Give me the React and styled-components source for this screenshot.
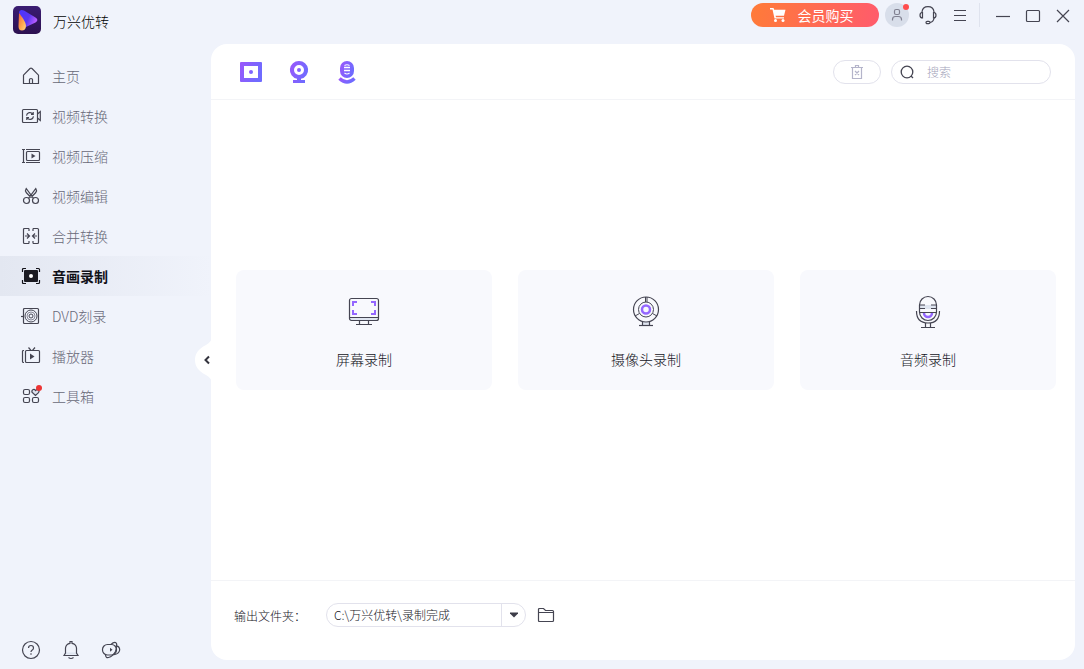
import { useState } from "react";
import styled, { createGlobalStyle } from "styled-components";

const GlobalStyle = createGlobalStyle`
	* {
		box-sizing: border-box;
	}

	body {
		margin: 0;
		background: #f0f3fb;
		color: #25252e;
		font-family: "Noto Sans CJK SC", "Noto Sans", sans-serif;
		font-size: 14px;
		font-weight: 300;
		line-height: 20px;
	}

	button,
	input,
	select {
		font: inherit;
		color: inherit;
	}
`;

const LINE = "#454552";

const Icon = ({ width = 20, height = 20, children, ...rest }) => (
	<svg
		width={width}
		height={height}
		viewBox={`0 0 ${width} ${height}`}
		fill="none"
		stroke={LINE}
		strokeWidth="1.2"
		overflow="visible"
		aria-hidden="true"
		{...rest}
	>
		{children}
	</svg>
);

const Logo = () => (
	<svg width="28" height="28" viewBox="0 0 28 28" aria-hidden="true">
		<defs>
			<linearGradient id="logoBack" x1="0" y1="0" x2="0" y2="1">
				<stop offset="0" stopColor="#3a1c72" />
				<stop offset="1" stopColor="#2d1150" />
			</linearGradient>
			<linearGradient id="logoPlay" x1="0" y1="0" x2="1" y2="0.4">
				<stop offset="0" stopColor="#4a35ff" />
				<stop offset="0.6" stopColor="#5a35f0" />
				<stop offset="1" stopColor="#b35cff" />
			</linearGradient>
			<linearGradient id="logoDrop" x1="0" y1="0" x2="1" y2="1">
				<stop offset="0" stopColor="#f0603a" />
				<stop offset="0.6" stopColor="#ffac50" />
				<stop offset="1" stopColor="#ffd88c" />
			</linearGradient>
		</defs>
		<rect width="28" height="28" rx="5" fill="url(#logoBack)" />
		<path
			d="M6 7C6 4 8.500 3.300 11 4.500L22.500 11.500C25 13 25 15 22.500 16.500L13 21Z"
			fill="url(#logoPlay)"
		/>
		<path
			d="M6 7C9 11 13 16 13 20C13 23 11 24.500 9 24.500C6.500 24.500 5.500 23 5.500 20Z"
			fill="url(#logoDrop)"
		/>
	</svg>
);

const HomeIcon = () => (
	<Icon>
		<path d="M2.500 9.200 9 2.500Q10 1.700 11 2.500L17.500 9.200V17.500H2.500Z" />
		<path d="M8.500 17.500V13.500Q8.500 12.500 10 12.500T11.500 13.500V17.500" />
	</Icon>
);

const ConvertIcon = () => (
	<Icon>
		<rect x="1.500" y="3.500" width="15" height="13" rx="1" />
		<path d="M16.500 8 19.300 5.500V14.500L16.500 12" />
		<path d="M5.500 9.600A3.500 3.500 0 0 1 11.800 8M12.500 10.400A3.500 3.500 0 0 1 6.200 12M12.200 6V8.300H10M5.800 14V11.700H8" />
	</Icon>
);

const CompressIcon = () => (
	<Icon>
		<path d="M2.500 3V17M1 3.500H4M1 16.500H4M5 3.500H19M5 16.500H19" />
		<rect x="5.500" y="5.500" width="13" height="9" rx="1" />
		<path d="M10.500 7.500 14.500 10 10.500 12.500Z" fill={LINE} stroke="none" />
	</Icon>
);

const CutIcon = () => (
	<Icon>
		<circle cx="5.500" cy="14.500" r="3" />
		<circle cx="14.500" cy="14.500" r="3" />
		<path d="M7.500 12.300 14.800 2.500Q16.200 4.500 14.800 6.500L10 11.500M12.500 12.300 5.200 2.500Q3.800 4.500 5.200 6.500L10 11.500" />
	</Icon>
);

const MergeIcon = () => (
	<Icon>
		<path d="M8 2.500H3.500Q2.500 2.500 2.500 3.500V16.500Q2.500 17.500 3.500 17.500H8M12 2.500H16.500Q17.500 2.500 17.500 3.500V16.500Q17.500 17.500 16.500 17.500H12" />
		<path d="M8 2.500V5M12 2.500V5M8 15V17.500M12 15V17.500M4 10H8.500M16 10H11.500M6 7.500 8.500 10 6 12.500M14 7.500 11.500 10 14 12.500" />
	</Icon>
);

const RecordIcon = () => (
	<Icon stroke="#111118">
		<path d="M1.500 6V3.500Q1.500 2.500 2.500 2.500H5M15 2.500H17.500Q18.500 2.500 18.500 3.500V6M18.500 14V16.500Q18.500 17.500 17.500 17.500H15M5 17.500H2.500Q1.500 17.500 1.500 16.500V14" />
		<rect x="3" y="4" width="14" height="12" rx="1" fill="#1b1b22" stroke="none" />
		<circle cx="10" cy="10" r="2" fill="#fff" stroke="none" />
	</Icon>
);

const DiscIcon = () => (
	<Icon>
		<rect x="2.500" y="2.500" width="15" height="15" rx="1" />
		<circle cx="10" cy="10" r="6" strokeWidth="1" />
		<circle cx="10" cy="10" r="4" stroke="#8a8a98" strokeWidth="1" />
		<circle cx="10" cy="10" r="2" strokeWidth="1" />
		<path d="M0 10.500H3" />
	</Icon>
);

const PlayerIcon = () => (
	<Icon>
		<rect x="4.500" y="4.500" width="14" height="12" rx="1" />
		<path d="M3 4.500H2.500Q1.500 4.500 1.500 5.500V15.500Q1.500 16.500 2.500 16.500H3M7.500 1.500 10 4.500H11.500L14 1.500" />
		<path d="M9 7.500 13.500 10.500 9 13.500Z" fill={LINE} stroke="none" />
	</Icon>
);

const ToolboxIcon = () => (
	<Icon>
		<rect x="2.500" y="3.500" width="6" height="5" rx="1.500" />
		<rect x="2.500" y="11.500" width="6" height="5" rx="1.500" />
		<rect x="11.500" y="11.500" width="6" height="5" rx="1.500" />
		<path
			d="M14.500 9.500 11 6.300Q10.500 4 12.300 3.500Q13.700 3.200 14.500 4.500Q16 3 17.500 4Q18.600 5.500 17.500 6.700Z"
			fill="#dfe3ef"
		/>
		<circle cx="18" cy="2" r="3" fill="#ec3434" stroke="none" />
	</Icon>
);

const CartIcon = () => (
	<Icon width={16} height={14} stroke="none" fill="#fff">
		<path d="M0 0H3.500L4.200 1.800H15.500L14 7.800H5.600L6 9.200H14V10.600H4.500L2.500 1.500H0Z" />
		<circle cx="5.500" cy="12.500" r="1.500" />
		<circle cx="13" cy="12.500" r="1.500" />
	</Icon>
);

const UserIcon = () => (
	<Icon width={12} height={14} stroke="#818191">
		<rect x="3.500" y="1.500" width="5" height="5" rx="1.500" />
		<path d="M1.500 12.500V11.500Q1.500 8.500 4.500 8.500H7.500Q10.500 8.500 10.500 11.500V12.500" />
	</Icon>
);

const HeadsetIcon = () => (
	<Icon>
		<path d="M4 8V7Q4.500 1.600 10 1.600T16 7V8M16 13Q15.500 17 12 17.500" />
		<path d="M4.500 7.500Q2 7.500 2 10.200T4.500 13ZM15.500 7.500Q18 7.500 18 10.200T15.500 13Z" />
		<rect x="8" y="16.300" width="4" height="2.400" rx="1.200" />
	</Icon>
);

const MenuIcon = () => (
	<Icon>
		<path d="M4 5.500H16M4 10.500H16M4 15.500H16" />
	</Icon>
);

const MinimizeIcon = () => (
	<Icon>
		<path d="M3 11.500H17" />
	</Icon>
);

const MaximizeIcon = () => (
	<Icon>
		<rect x="3.500" y="5.500" width="13" height="11" rx="1" />
	</Icon>
);

const CloseIcon = () => (
	<Icon>
		<path d="M4 5 16 17M16 5 4 17" />
	</Icon>
);

const PurpleGradient = ({ id }) => (
	<linearGradient id={id} x1="0" y1="0" x2="1" y2="0.4">
		<stop offset="0" stopColor="#9c56fb" />
		<stop offset="1" stopColor="#6f6bff" />
	</linearGradient>
);

const ScreenTab = () => (
	<svg width="24" height="24" viewBox="0 0 24 24" aria-hidden="true">
		<PurpleGradient id="screenTab" />
		<path
			d="M2 2H22Q23 2 23 3V21Q23 22 22 22H2Q1 22 1 21V3Q1 2 2 2ZM5 6V18H19V6Z"
			fill="url(#screenTab)"
			fillRule="evenodd"
		/>
		<circle cx="12" cy="12" r="2" fill="url(#screenTab)" />
	</svg>
);

const CameraTab = () => (
	<svg width="24" height="24" viewBox="0 0 24 24" aria-hidden="true">
		<PurpleGradient id="cameraTab" />
		<path
			d="M12 1A9 9 0 0 1 14 18.800V20H18V23H6V20H10V18.800A9 9 0 0 1 12 1ZM12 5A5 5 0 1 0 12 15A5 5 0 1 0 12 5Z"
			fill="url(#cameraTab)"
			fillRule="evenodd"
		/>
		<circle cx="12" cy="10" r="2" fill="url(#cameraTab)" />
	</svg>
);

const AudioTab = () => (
	<svg width="24" height="24" viewBox="0 0 24 24" aria-hidden="true">
		<PurpleGradient id="audioTab" />
		<rect x="5" y="1" width="14" height="17" rx="7" fill="url(#audioTab)" />
		<path d="M9 7.500H15M9 10.500H15" stroke="#fff" strokeWidth="1.500" />
		<path
			d="M9.500 5.500Q12 4 14.500 5.500M9.500 13Q12 15 14.500 13"
			stroke="#fff"
			strokeWidth="1.200"
			fill="none"
		/>
		<path
			d="M4.500 18.500Q12 25.500 19.500 18.500"
			stroke="url(#audioTab)"
			strokeWidth="3.500"
			fill="none"
		/>
	</svg>
);

const TrashIcon = () => (
	<Icon width={14} height={16} stroke="#b4b4ca">
		<path d="M1 3.500H13M5.500 3V1.500H8.500V3M2.500 3.500V14.500H11.500V3.500M5 7 9 11M9 7 5 11" />
	</Icon>
);

const SearchIcon = () => (
	<Icon width={14} height={14} strokeWidth="1.3">
		<circle cx="7" cy="7" r="5.800" />
		<path d="M11 11 13 13" />
	</Icon>
);

const MonitorIcon = () => (
	<Icon width={36} height={36}>
		<path d="M4 25H32V27.500H4Z" fill="#dfe5f0" stroke="none" />
		<rect x="3.500" y="5.500" width="29" height="22" rx="2" />
		<path d="M4 24.500H32M13.500 28V31M22.500 28V31M10 31.500H26" />
		<path
			d="M11 9H7V13M25 9H29V13M29 17V21H25M11 21H7V17"
			stroke="#9467ff"
			strokeWidth="2"
		/>
	</Icon>
);

const WebcamIcon = () => (
	<Icon width={36} height={36}>
		<path d="M14.500 28V32.500H21.500V28Z" fill="#dfe5f0" />
		<circle cx="18" cy="16.500" r="12.500" fill="#f8f9fd" />
		<circle cx="18" cy="16.500" r="7.500" strokeWidth="1" />
		<circle cx="18" cy="16.500" r="4" stroke="#9467ff" strokeWidth="2.500" />
		<path d="M17.500 4V9M19 4V9M11.500 20.500 7 23M24.500 20.500 29 23" strokeWidth="1" />
		<path d="M11 32.500H25" />
	</Icon>
);

const MicIcon = () => (
	<Icon width={36} height={36}>
		<path d="M10 12H26V16H10Z" fill="#dfe5f0" stroke="none" />
		<path
			d="M14 20A4 4 0 0 0 22 20"
			stroke="#9467ff"
			strokeWidth="2.500"
		/>
		<rect x="9.500" y="3.500" width="17" height="24" rx="8.500" />
		<path d="M9.500 19.500H26.500M9.500 12H15M21 12H26.500M9.500 15.500H15M21 15.500H26.500" />
		<path d="M6.500 18Q6.500 30 18 30T29.500 18M15.500 30V34M20.500 30V34M11 34.500H25" />
	</Icon>
);

const FolderIcon = () => (
	<Icon width={18} height={18}>
		<path d="M1.500 3.500Q1.500 2.500 2.500 2.500H6.500L8.500 4.500H15.500Q16.500 4.500 16.500 5.500V14.500Q16.500 15.500 15.500 15.500H2.500Q1.500 15.500 1.500 14.500ZM1.500 6.500H16.500" />
	</Icon>
);

const HelpIcon = () => (
	<Icon>
		<circle cx="10" cy="10" r="8.500" />
		<path d="M7.500 8Q7.500 5.500 10 5.500T12.500 8Q12.500 9.300 11 10.200Q10 10.900 10 12M10 13.300V14.800" />
	</Icon>
);

const BellIcon = () => (
	<Icon>
		<path d="M4 12.500H16V14.500H4Z" fill="#dfe5f0" stroke="none" />
		<path d="M3 15.500 4.500 13V8Q5 4 9 3.300V1.500H11V3.300Q15 4 15.500 8V13L17 15.500ZM7.500 17.500Q10 19.500 12.500 17.500" />
	</Icon>
);

const FeedbackIcon = () => (
	<Icon>
		<rect x="1.500" y="4.500" width="14" height="10.500" rx="5" />
		<path d="M10 4.500Q12.500 2 14.500 2.500Q16.300 3.500 15.500 5.800Q18.700 6.500 18.700 10Q18 14 13 14.700M4.500 15Q4.800 18.200 7.500 17.500Q12 16.200 14.500 11.500Q16 8 15.500 5.800" />
		<path d="M9 7.800 11.500 9.800 9 11.800Z" fill={LINE} stroke="none" />
	</Icon>
);

const navItems = [
	{ label: "主页", Glyph: HomeIcon },
	{ label: "视频转换", Glyph: ConvertIcon },
	{ label: "视频压缩", Glyph: CompressIcon },
	{ label: "视频编辑", Glyph: CutIcon },
	{ label: "合并转换", Glyph: MergeIcon },
	{ label: "音画录制", Glyph: RecordIcon },
	{ label: "DVD刻录", Glyph: DiscIcon },
	{ label: "播放器", Glyph: PlayerIcon },
	{ label: "工具箱", Glyph: ToolboxIcon }
];

const recorders = [
	{ label: "屏幕录制", Glyph: MonitorIcon, Tab: ScreenTab },
	{ label: "摄像头录制", Glyph: WebcamIcon, Tab: CameraTab },
	{ label: "音频录制", Glyph: MicIcon, Tab: AudioTab }
];

const App = () => {
	const [active, setActive] = useState("音画录制");
	const [query, setQuery] = useState("");

	return (
		<Window>
			<GlobalStyle />
			<TitleBar>
				<Brand>
					<Logo />
					<AppName>万兴优转</AppName>
				</Brand>
				<BuyButton>
					<CartIcon />
					会员购买
				</BuyButton>
				<Avatar aria-label="账户">
					<UserIcon />
					<AvatarDot />
				</Avatar>
				<BarButton aria-label="客服">
					<HeadsetIcon />
				</BarButton>
				<BarButton aria-label="菜单">
					<MenuIcon />
				</BarButton>
				<WindowControls>
					<BarButton $width="30px" aria-label="最小化">
						<MinimizeIcon />
					</BarButton>
					<BarButton $width="30px" aria-label="最大化">
						<MaximizeIcon />
					</BarButton>
					<BarButton $width="30px" aria-label="关闭">
						<CloseIcon />
					</BarButton>
				</WindowControls>
			</TitleBar>

			<Body>
				<Sidebar>
					<Nav>
						{navItems.map(({ label, Glyph }) => (
							<NavItem
								key={label}
								$active={label === active}
								onClick={() => setActive(label)}
							>
								<Glyph />
								{label}
							</NavItem>
						))}
					</Nav>
					<SidebarFooter>
						<PlainButton aria-label="帮助">
							<HelpIcon />
						</PlainButton>
						<PlainButton aria-label="通知">
							<BellIcon />
						</PlainButton>
						<PlainButton aria-label="反馈">
							<FeedbackIcon />
						</PlainButton>
					</SidebarFooter>
				</Sidebar>

				<Panel>
					<CollapseButton aria-label="收起">
						<svg width="17" height="44" viewBox="0 0 17 44" aria-hidden="true">
							<path
								d="M17 0Q16 4 11 7C3 11 0 16 0 22S3 33 11 37Q16 40 17 44Z"
								fill="#fff"
							/>
							<path
								d="M14 18.500 10.500 22 14 25.500"
								fill="none"
								stroke="#33333d"
								strokeWidth="2"
							/>
						</svg>
					</CollapseButton>

					<Toolbar>
						<Tabs>
							{recorders.map(({ label, Tab }) => (
								<TabButton key={label} aria-label={label}>
									<Tab />
								</TabButton>
							))}
						</Tabs>
						<TrashButton aria-label="删除">
							<TrashIcon />
						</TrashButton>
						<SearchBox>
							<SearchIcon />
							<SearchInput
								aria-label="搜索"
								placeholder="搜索"
								value={query}
								onChange={e => setQuery(e.target.value)}
							/>
						</SearchBox>
					</Toolbar>

					<Content>
						<Cards>
							{recorders.map(({ label, Glyph }) => (
								<Card key={label}>
									<Glyph />
									{label}
								</Card>
							))}
						</Cards>
					</Content>

					<OutputBar>
						<OutputLabel htmlFor="output">输出文件夹：</OutputLabel>
						<SelectBox>
							<Select id="output">
								<option>C:\万兴优转\录制完成</option>
							</Select>
							<SelectArrow>
								<svg width="8" height="6" viewBox="0 0 8 6" aria-hidden="true">
									<path d="M0 0.500H8V1.500L4 5.500 0 1.500Z" fill="#3c3c48" />
								</svg>
							</SelectArrow>
						</SelectBox>
						<PlainButton aria-label="打开文件夹">
							<FolderIcon />
						</PlainButton>
					</OutputBar>
				</Panel>
			</Body>
		</Window>
	);
};

export default App;

const Window = styled.div`
	display: flex;
	flex-direction: column;
	min-height: 100vh;
`;

const TitleBar = styled.header`
	display: flex;
	align-items: flex-start;
	height: 44px;
	padding-right: 6px;
`;

const Brand = styled.div`
	display: flex;
	align-items: center;
	gap: 12px;
	flex: 1;
	padding: 6px 0 0 13px;
`;

const AppName = styled.span`
	padding-top: 2px;
	color: #000;
`;

const PlainButton = styled.button`
	display: flex;
	align-items: center;
	justify-content: center;
	padding: 0;
	border: none;
	background: none;
	cursor: pointer;
`;

const BuyButton = styled(PlainButton)`
	gap: 12px;
	width: 128px;
	height: 24px;
	margin: 3px 6px 0 0;
	padding: 0 7px 1px 0;
	border-radius: 12px;
	background: linear-gradient(100deg, #ff7b38, #ff5b6c);
	color: #fff;
	font-weight: 400;
`;

const Avatar = styled(PlainButton)`
	position: relative;
	width: 24px;
	height: 24px;
	margin: 3px 3px 0 0;
	border-radius: 50%;
	background: #d8deea;
`;

const AvatarDot = styled.span`
	position: absolute;
	top: 1px;
	right: 0;
	width: 6px;
	height: 6px;
	border-radius: 50%;
	background: #ff4d4d;
`;

const BarButton = styled(PlainButton)`
	width: ${({ $width }) => $width || "32px"};
	height: 30px;
`;

const WindowControls = styled.div`
	display: flex;
	margin-left: 3px;
	padding-left: 9px;
	background: linear-gradient(#dfe3ee, #dfe3ee) 0 3px / 1px 24px no-repeat;
`;

const Body = styled.div`
	display: flex;
	flex: 1;
	padding: 0 9px 9px 0;
`;

const Sidebar = styled.aside`
	display: flex;
	flex-direction: column;
	justify-content: space-between;
	width: 211px;
	padding-top: 12px;
`;

const Nav = styled.nav`
	display: flex;
	flex-direction: column;
`;

const NavItem = styled(PlainButton)`
	justify-content: flex-start;
	gap: 11px;
	height: 40px;
	padding-left: 21px;
	background: ${({ $active }) =>
		$active ? "linear-gradient(90deg, #e3e7f1, #f0f3fb)" : "none"};
	color: ${({ $active }) => ($active ? "#111118" : "#686878")};
	font-weight: ${({ $active }) => ($active ? 700 : 300)};
`;

const SidebarFooter = styled.div`
	display: flex;
	gap: 20px;
	padding-left: 21px;
`;

const Panel = styled.main`
	position: relative;
	display: flex;
	flex-direction: column;
	flex: 1;
	border-radius: 16px;
	background: #fff;
`;

const CollapseButton = styled(PlainButton)`
	position: absolute;
	top: 294px;
	left: -16px;
`;

const Toolbar = styled.div`
	display: flex;
	align-items: center;
	height: 56px;
	padding: 0 24px 0 16px;
	border-bottom: 1px solid #f3f4f7;
`;

const Tabs = styled.div`
	display: flex;
	flex: 1;
`;

const TabButton = styled(PlainButton)`
	width: 48px;
	height: 40px;
`;

const TrashButton = styled(PlainButton)`
	width: 48px;
	height: 24px;
	margin-right: 10px;
	border: 1px solid #e2e2ec;
	border-radius: 12px;
`;

const SearchBox = styled.div`
	display: flex;
	align-items: center;
	gap: 13px;
	width: 160px;
	height: 24px;
	padding: 0 8px;
	border: 1px solid #e2e2ec;
	border-radius: 12px;
`;

const SearchInput = styled.input`
	flex: 1;
	min-width: 0;
	height: 20px;
	padding: 0;
	border: none;
	outline: none;
	background: none;
	font-size: 12px;

	&::placeholder {
		color: #a4a4ba;
	}
`;

const Content = styled.div`
	display: flex;
	align-items: center;
	flex: 1;
	padding: 0 19px 20px 25px;
`;

const Cards = styled.div`
	display: grid;
	grid-template-columns: repeat(3, 1fr);
	gap: 26px;
	flex: 1;
`;

const Card = styled(PlainButton)`
	flex-direction: column;
	gap: 20px;
	height: 120px;
	padding-top: 2px;
	border-radius: 8px;
	background: #f8f9fd;
	color: #14141c;
`;

const OutputBar = styled.footer`
	display: flex;
	align-items: center;
	height: 80px;
	padding: 0 23px 11px;
	border-top: 1px solid #f3f4f7;
`;

const OutputLabel = styled.label`
	width: 92px;
	padding-top: 2px;
	color: #14141c;
	font-size: 12px;
`;

const SelectBox = styled.div`
	position: relative;
	width: 200px;
	margin-right: 11px;
`;

const Select = styled.select`
	display: block;
	width: 100%;
	height: 24px;
	padding: 0 32px 0 7px;
	border: 1px solid #e2e2ec;
	border-radius: 12px;
	outline: none;
	background: #fff;
	color: #14141c;
	font-size: 12px;
	appearance: none;
`;

const SelectArrow = styled.span`
	position: absolute;
	top: 0;
	right: 0;
	display: flex;
	align-items: center;
	justify-content: center;
	width: 25px;
	height: 24px;
	border-left: 1px solid #e2e2ec;
	pointer-events: none;
`;
